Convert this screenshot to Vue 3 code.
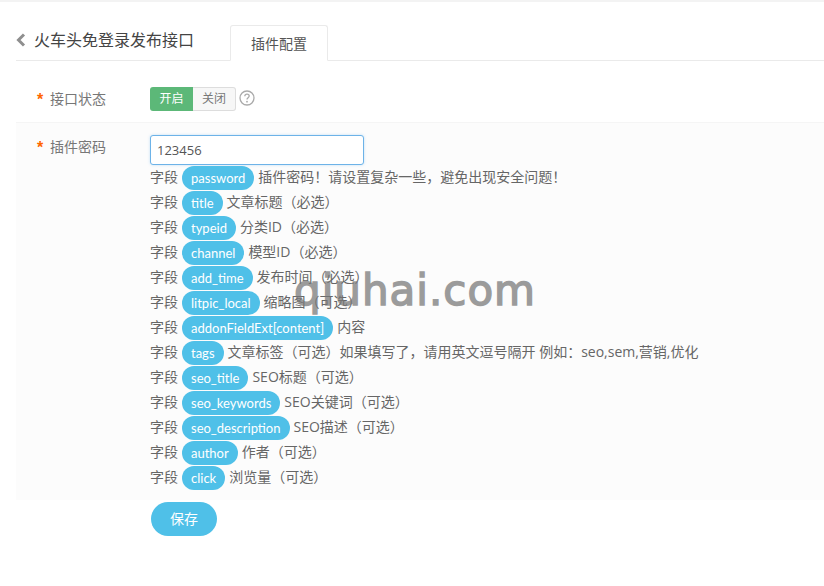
<script setup>
const fields = [
  ['password', '插件密码！请设置复杂一些，避免出现安全问题！'],
  ['title', '文章标题（必选）'],
  ['typeid', '分类ID（必选）'],
  ['channel', '模型ID（必选）'],
  ['add_time', '发布时间（必选）'],
  ['litpic_local', '缩略图（可选）'],
  ['addonFieldExt[content]', '内容'],
  ['tags', '文章标签（可选）如果填写了，请用英文逗号隔开 例如：seo,sem,营销,优化'],
  ['seo_title', 'SEO标题（可选）'],
  ['seo_keywords', 'SEO关键词（可选）'],
  ['seo_description', 'SEO描述（可选）'],
  ['author', '作者（可选）'],
  ['click', '浏览量（可选）'],
]
</script>

<template>
  <div class="page">
    <header class="head">
      <svg class="back" width="10" height="14" viewBox="0 0 10 14"><path d="M8 1.5 2.5 7 8 12.5" fill="none" stroke="#8f8f8f" stroke-width="3"/></svg>
      <h1 class="title">火车头免登录发布接口</h1>
      <div class="tab">插件配置</div>
    </header>

    <section class="row status">
      <div class="label"><span class="star">*</span><span>接口状态</span></div>
      <div class="toggle">
        <span class="on">开启</span>
        <span class="off">关闭</span>
      </div>
      <svg class="help" width="16" height="16" viewBox="0 0 16 16">
        <circle cx="8" cy="8" r="7" fill="none" stroke="#aaa" stroke-width="1.3"/>
        <path d="M5.8 6.2C5.9 4.9 6.8 4.2 8 4.2s2.2.8 2.2 1.9c0 1.6-2.2 1.7-2.2 3.4" fill="none" stroke="#aaa" stroke-width="1.3"/>
        <circle cx="8" cy="11.7" r=".9" fill="#aaa"/>
      </svg>
    </section>

    <section class="row secret">
      <div class="label"><span class="star">*</span><span>插件密码</span></div>
      <div class="body">
        <input class="input" value="123456" />
        <div class="list">
          <div v-for="f in fields" :key="f[0]" class="field">
            <span>字段</span>
            <span class="pill">{{ f[0] }}</span>
            <span class="desc">{{ f[1] }}</span>
          </div>
        </div>
      </div>
    </section>

    <button class="save">保存</button>
    <div class="mark">qiuhai.com</div>
  </div>
</template>

<style>
html, body { background: #fff; }
</style>

<style scoped>
.page {
  position: relative;
  width: 824px;
  height: 586px;
  overflow: hidden;
  box-sizing: border-box;
  padding: 25px 0 0 16px;
  font-family: Lato, "Noto Sans CJK SC", sans-serif;
  font-size: 14px;
  color: #666;
  background: #fff;
}
.page::before {
  content: "";
  position: absolute;
  inset: 0 0 auto 0;
  height: 2px;
  background: #f3f3f3;
}
.head {
  display: flex;
  align-items: flex-start;
  height: 35px;
  border-bottom: 1px solid #eaeaea;
}
.back { margin: 8px 8px 0 0; }
.title {
  margin: 3px 36px 0 0;
  width: 160px;
  font-size: 16px;
  line-height: 24px;
  font-weight: 400;
  color: #444;
  white-space: nowrap;
}
.tab {
  box-sizing: border-box;
  width: 98px;
  height: 36px;
  border: 1px solid #eaeaea;
  border-bottom-color: #fff;
  border-radius: 3px 3px 0 0;
  background: #fff;
  text-align: center;
  line-height: 36px;
  color: #555;
}
.row { display: flex; }
.label {
  display: flex;
  width: 134px;
  box-sizing: border-box;
  padding-left: 21px;
  line-height: 24px;
  color: #777;
}
.star {
  width: 13px;
  color: #f60;
  font-family: "Liberation Sans", sans-serif;
  font-size: 16px;
  line-height: 26px;
  font-weight: 700;
}
.status {
  height: 62px;
  box-sizing: border-box;
  padding-top: 26px;
  align-items: flex-start;
  border-bottom: 1px solid #f5f5f5;
}
.toggle {
  display: flex;
  height: 24px;
  line-height: 24px;
  font-size: 12px;
}
.on {
  width: 43px;
  text-align: center;
  background: #5cb878;
  color: #fff;
  border-radius: 3px 0 0 3px;
}
.off {
  width: 43px;
  box-sizing: border-box;
  text-align: center;
  background: #f7f7f7;
  border: 1px solid #ddd;
  border-left: 0;
  border-radius: 0 3px 3px 0;
  line-height: 22px;
  color: #777;
}
.help { margin: 3px 0 0 3px; }
.secret {
  height: 377px;
  box-sizing: border-box;
  padding-top: 12px;
  background: #fcfcfc;
}
.input {
  display: block;
  box-sizing: border-box;
  width: 214px;
  height: 30px;
  padding: 0 6px;
  border: 1px solid #6db3e8;
  border-radius: 3px;
  box-shadow: 0 0 3px rgba(110, 180, 235, .4);
  outline: 0;
  background: #fff;
  font-family: "Open Sans", sans-serif;
  font-size: 13px;
  color: #555;
}
.field {
  display: flex;
  align-items: flex-start;
  gap: 4px;
  height: 25px;
  line-height: 24px;
  white-space: nowrap;
  color: #666;
}
.pill {
  height: 24px;
  margin-top: 1px;
  line-height: 25px;
  padding: 0 9px;
  border-radius: 12px;
  background: #4fc0e8;
  color: #fff;
  font-size: 13px;
}
.desc { font-family: "Open Sans", "Noto Sans CJK SC", sans-serif; }
.save {
  display: block;
  width: 66px;
  height: 34px;
  margin: 2px 0 0 135px;
  border: 0;
  border-radius: 17px;
  background: #4fc0e8;
  color: #fff;
  font: inherit;
  padding: 0 0 2px;
}
.mark {
  position: absolute;
  left: 294px;
  top: 262px;
  font-family: "DejaVu Sans", sans-serif;
  font-size: 42px;
  line-height: 58px;
  letter-spacing: 1px;
  color: #777;
  -webkit-text-stroke: 1.5px #777;
  opacity: .72;
  white-space: nowrap;
}
</style>
